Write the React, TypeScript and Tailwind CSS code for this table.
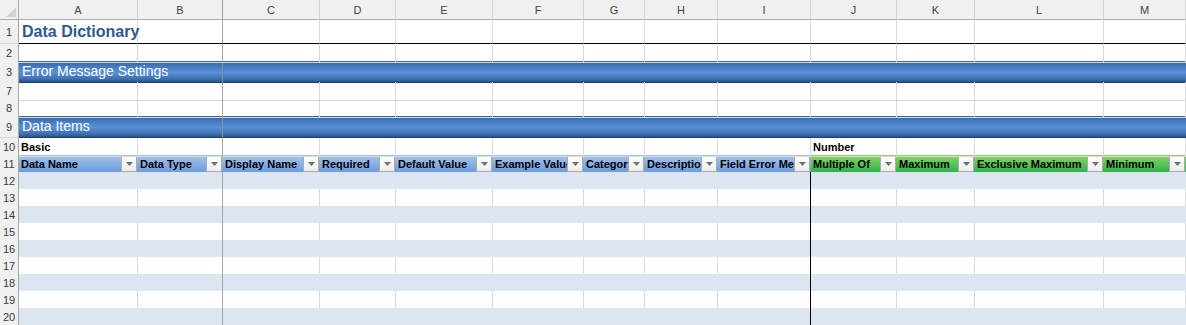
import React from "react";

// Column template: row-number gutter + columns A..M (widths include the right gridline)
const GRID =
  "grid grid-cols-[19px_119px_85px_97px_76px_97px_91px_61px_73px_93px_86px_78px_129px_82px]";

const LETTERS = ["A", "B", "C", "D", "E", "F", "G", "H", "I", "J", "K", "L", "M"];

type HeaderCell = { label: string; green?: boolean };

const HEADERS: HeaderCell[] = [
  { label: "Data Name" },
  { label: "Data Type" },
  { label: "Display Name" },
  { label: "Required" },
  { label: "Default Value" },
  { label: "Example Value" },
  { label: "Category" },
  { label: "Description" },
  { label: "Field Error Message" },
  { label: "Multiple Of", green: true },
  { label: "Maximum", green: true },
  { label: "Exclusive Maximum", green: true },
  { label: "Minimum", green: true },
];

const RowNum = ({ n }: { n: number }) => (
  <div className="flex items-center justify-center border-r border-b border-r-[#a6a6a6] border-b-[#d8d8d8] bg-[#f0f0f0] pt-px text-[11px] text-[#3a3a3a]">
    {n}
  </div>
);

// Plain worksheet cell; col B carries the freeze-pane line on its right edge
const Cell = ({
  col,
  bottom = "border-b-[#d9d9d9]",
  children,
}: {
  col: number;
  bottom?: string;
  children?: React.ReactNode;
}) => (
  <div
    className={`relative flex items-end border-r border-b ${bottom} ${
      col === 1 ? "border-r-[#a6a6a6]" : "border-r-[#d9d9d9]"
    }`}
  >
    {children}
  </div>
);

const PlainRow = ({ n, h }: { n: number; h: string }) => (
  <div className={`${GRID} ${h}`}>
    <RowNum n={n} />
    {LETTERS.map((l, i) => (
      <Cell key={l} col={i} />
    ))}
  </div>
);

const BandRow = ({ n, h, title }: { n: number; h: string; title: string }) => (
  <div className={`${GRID} ${h}`}>
    <RowNum n={n} />
    <div className="col-span-2 flex items-center border-r border-r-[#8c8c8c] border-b border-b-[#1f3f6b] bg-[linear-gradient(to_bottom,#3566a3_0%,#4a81c9_35%,#5a90d7_55%,#3f70b1_85%,#2a5389_100%)] pl-[3px] text-[14px] whitespace-nowrap text-white">
      {title}
    </div>
    <div className="col-span-11 border-b border-b-[#1f3f6b] bg-[linear-gradient(to_bottom,#3566a3_0%,#4a81c9_35%,#5a90d7_55%,#3f70b1_85%,#2a5389_100%)]" />
  </div>
);

const FilterButton = () => (
  <span className="flex h-[16px] w-[16px] shrink-0 items-center justify-center border border-[#ababab] bg-[linear-gradient(to_bottom,#ffffff,#ececec)]">
    <svg width="7" height="4" viewBox="0 0 7 4">
      <path d="M0 0h7L3.5 4z" fill="#707070" />
    </svg>
  </span>
);

const DataRow = ({ n }: { n: number }) => {
  const banded = n % 2 === 0;
  return (
    <div className={`${GRID} h-[17px]`}>
      <RowNum n={n} />
      {LETTERS.map((l, i) => {
        let right = banded ? "border-r-transparent" : "border-r-[#d9d9d9]";
        if (i === 1) right = "border-r-[#a6a6a6]";
        if (i === 8) right = "border-r-black";
        return (
          <div
            key={l}
            className={`border-r border-b border-b-[#95b3d7] ${right} ${
              banded ? "bg-[#dce6f1]" : "bg-white"
            }`}
          />
        );
      })}
    </div>
  );
};

export default function App() {
  return (
    <div className="h-[325px] w-[1186px] overflow-hidden bg-white font-['Liberation_Sans',Arial,sans-serif] text-black">
      {/* column letters */}
      <div className={`${GRID} h-[20px]`}>
        <div className="relative border-r border-b border-r-[#ababab] border-b-[#ababab] bg-[#f0f0f0]">
          <svg className="absolute right-[2px] bottom-[2px]" width="10" height="10" viewBox="0 0 10 10">
            <path d="M10 0v10H0z" fill="#d2d2d2" />
          </svg>
        </div>
        {LETTERS.map((l, i) => (
          <div
            key={l}
            className={`flex items-center justify-center border-r border-b border-b-[#ababab] bg-[#f0f0f0] pt-[2px] text-[11px] text-[#444] ${
              i === 1 ? "border-r-[#9e9e9e]" : "border-r-[#d4d4d4]"
            }`}
          >
            {l}
          </div>
        ))}
      </div>

      {/* row 1: title with black bottom border */}
      <div className={`${GRID} h-[24px]`}>
        <RowNum n={1} />
        {LETTERS.map((l, i) => (
          <Cell key={l} col={i} bottom="border-b-black">
            {i === 0 && (
              <span className="absolute bottom-[3px] left-[3px] text-[16px] leading-[16px] font-bold whitespace-nowrap text-[#30598f]">
                Data Dictionary
              </span>
            )}
          </Cell>
        ))}
      </div>

      <PlainRow n={2} h="h-[17px]" />
      <BandRow n={3} h="h-[21px]" title="Error Message Settings" />
      <PlainRow n={7} h="h-[17px]" />
      <PlainRow n={8} h="h-[17px]" />
      <BandRow n={9} h="h-[22px]" title="Data Items" />

      {/* row 10: group captions */}
      <div className={`${GRID} h-[17px]`}>
        <RowNum n={10} />
        {LETTERS.map((l, i) => (
          <Cell key={l} col={i}>
            {(i === 0 || i === 9) && (
              <span className="absolute bottom-[2px] left-[2px] text-[11px] leading-[13px] font-bold whitespace-nowrap">
                {i === 0 ? "Basic" : "Number"}
              </span>
            )}
          </Cell>
        ))}
      </div>

      {/* row 11: table header with filter buttons */}
      <div className={`${GRID} h-[17px]`}>
        <RowNum n={11} />
        {HEADERS.map((hd) => (
          <div
            key={hd.label}
            className={`flex items-center pr-px ${
              hd.green
                ? "bg-[linear-gradient(to_bottom,#8fd665,#21ae49)]"
                : "bg-[linear-gradient(to_bottom,#a6c5ec,#6597dd)]"
            }`}
          >
            <span className="min-w-0 flex-1 overflow-hidden pl-[2px] text-[11px] font-bold whitespace-nowrap">
              {hd.label}
            </span>
            <FilterButton />
          </div>
        ))}
      </div>

      {[12, 13, 14, 15, 16, 17, 18, 19, 20].map((n) => (
        <DataRow key={n} n={n} />
      ))}
    </div>
  );
}
